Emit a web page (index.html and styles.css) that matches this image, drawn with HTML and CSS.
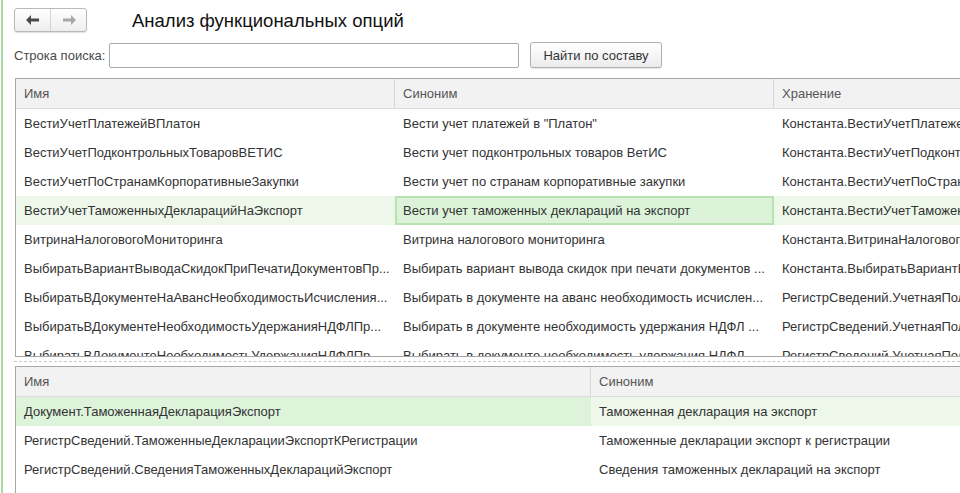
FILE: index.html
```html
<!DOCTYPE html>
<html lang="ru">
<head>
<meta charset="utf-8">
<title>Анализ функциональных опций</title>
<link rel="stylesheet" href="styles.css">
</head>
<body>
<div class="page">
  <div class="topbar">
    <div class="nav">
      <button class="navbtn back" type="button">
        <svg width="14" height="10" viewBox="0 0 14 10"><path d="M0 5 L5 0 L5 3.5 L13 3.5 L13 6.5 L5 6.5 L5 10 Z" fill="#4a4a4a"/></svg>
      </button>
      <button class="navbtn fwd" type="button">
        <svg width="14" height="10" viewBox="0 0 14 10"><path d="M14 5 L9 0 L9 3.5 L1 3.5 L1 6.5 L9 6.5 L9 10 Z" fill="#a8a8a8"/></svg>
      </button>
    </div>
    <h1 class="title">Анализ функциональных опций</h1>
  </div>
  <div class="search">
    <label class="search-label">Строка поиска:</label>
    <input class="search-input" type="text">
    <button class="find-btn" type="button">Найти по составу</button>
  </div>

  <div class="grid top-grid">
    <div class="row head">
      <div class="cell c1">Имя</div>
      <div class="cell c2">Синоним</div>
      <div class="cell c3">Хранение</div>
    </div>
    <div class="row">
      <div class="cell c1">ВестиУчетПлатежейВПлатон</div>
      <div class="cell c2">Вести учет платежей в "Платон"</div>
      <div class="cell c3">Константа.ВестиУчетПлатежейВПлатон</div>
    </div>
    <div class="row">
      <div class="cell c1">ВестиУчетПодконтрольныхТоваровВЕТИС</div>
      <div class="cell c2">Вести учет подконтрольных товаров ВетИС</div>
      <div class="cell c3">Константа.ВестиУчетПодконтрольныхТоваровВЕТИС</div>
    </div>
    <div class="row">
      <div class="cell c1">ВестиУчетПоСтранамКорпоративныеЗакупки</div>
      <div class="cell c2">Вести учет по странам корпоративные закупки</div>
      <div class="cell c3">Константа.ВестиУчетПоСтранамКорпоративныеЗакупки</div>
    </div>
    <div class="row selected">
      <div class="cell c1">ВестиУчетТаможенныхДекларацийНаЭкспорт</div>
      <div class="cell c2 current">Вести учет таможенных деклараций на экспорт</div>
      <div class="cell c3">Константа.ВестиУчетТаможенныхДекларацийНаЭкспорт</div>
    </div>
    <div class="row">
      <div class="cell c1">ВитринаНалоговогоМониторинга</div>
      <div class="cell c2">Витрина налогового мониторинга</div>
      <div class="cell c3">Константа.ВитринаНалоговогоМониторинга</div>
    </div>
    <div class="row">
      <div class="cell c1">ВыбиратьВариантВыводаСкидокПриПечатиДокументовПр...</div>
      <div class="cell c2">Выбирать вариант вывода скидок при печати документов ...</div>
      <div class="cell c3">Константа.ВыбиратьВариантВыводаСкидок</div>
    </div>
    <div class="row">
      <div class="cell c1">ВыбиратьВДокументеНаАвансНеобходимостьИсчисления...</div>
      <div class="cell c2">Выбирать в документе на аванс необходимость исчислен...</div>
      <div class="cell c3">РегистрСведений.УчетнаяПолитика</div>
    </div>
    <div class="row">
      <div class="cell c1">ВыбиратьВДокументеНеобходимостьУдержанияНДФЛПр...</div>
      <div class="cell c2">Выбирать в документе необходимость удержания НДФЛ ...</div>
      <div class="cell c3">РегистрСведений.УчетнаяПолитика</div>
    </div>
    <div class="row">
      <div class="cell c1">ВыбиратьВДокументеНеобходимостьУдержанияНДФЛПр...</div>
      <div class="cell c2">Выбирать в документе необходимость удержания НДФЛ ...</div>
      <div class="cell c3">РегистрСведений.УчетнаяПолитика</div>
    </div>
  </div>

  <div class="splitter"></div>

  <div class="grid bottom-grid">
    <div class="row head">
      <div class="cell b1">Имя</div>
      <div class="cell b2">Синоним</div>
    </div>
    <div class="row selected">
      <div class="cell b1 current-row">Документ.ТаможеннаяДекларацияЭкспорт</div>
      <div class="cell b2">Таможенная декларация на экспорт</div>
    </div>
    <div class="row">
      <div class="cell b1">РегистрСведений.ТаможенныеДекларацииЭкспортКРегистрации</div>
      <div class="cell b2">Таможенные декларации экспорт к регистрации</div>
    </div>
    <div class="row">
      <div class="cell b1">РегистрСведений.СведенияТаможенныхДекларацийЭкспорт</div>
      <div class="cell b2">Сведения таможенных деклараций на экспорт</div>
    </div>
  </div>
</div>
</body>
</html>
```
FILE: styles.css
```css
html, body {
  margin: 0;
  padding: 0;
  background: #fff;
}
body {
  width: 960px;
  height: 493px;
  overflow: hidden;
  font-family: "Liberation Sans", Arial, sans-serif;
  font-size: 13px;
  color: #333;
}
.page {
  margin-left: 1px;
  border-left: 2px solid #a9d9a1;
  height: 493px;
  box-sizing: border-box;
  padding-left: 11px;
  overflow: hidden;
}
.topbar {
  display: flex;
  align-items: center;
  padding-top: 8px;
  height: 24px;
}
.nav {
  display: flex;
  width: 73px;
  height: 24px;
  box-sizing: border-box;
  border: 1px solid #b9b9b9;
  border-radius: 3px;
  background: linear-gradient(#ffffff, #eeeeee);
  box-shadow: 0 1px 1px rgba(0,0,0,0.12);
}
.navbtn {
  flex: 1;
  border: 0;
  margin: 0;
  padding: 0;
  background: transparent;
  display: flex;
  align-items: center;
  justify-content: center;
}
.navbtn.back {
  border-right: 1px solid #d4d4d4;
}
.title {
  margin: 0 0 0 45px;
  font-size: 18.5px;
  font-weight: normal;
  color: #111;
  line-height: 24px;
  position: relative;
  top: 1px;
}
.search {
  display: flex;
  align-items: center;
  margin-top: 10px;
  height: 26px;
}
.search-label {
  color: #4a4a4a;
  width: 95px;
}
.search-input {
  width: 410px;
  height: 25px;
  box-sizing: border-box;
  border: 1px solid #aaaaaa;
  border-radius: 2px;
  margin: 0;
  padding: 0 4px;
}
.find-btn {
  margin-left: 11px;
  width: 132px;
  height: 26px;
  box-sizing: border-box;
  border: 1px solid #b0b0b0;
  border-radius: 3px;
  background: linear-gradient(#ffffff, #ececec);
  box-shadow: 0 1px 1px rgba(0,0,0,0.1);
  font-family: "Liberation Sans", Arial, sans-serif;
  font-size: 13px;
  color: #333;
  padding: 0;
}
.grid {
  border: 1px solid #a7a7a7;
  border-right: 0;
  width: 1100px;
  margin-left: 1px;
  box-sizing: border-box;
  overflow: hidden;
}
.top-grid {
  margin-top: 10px;
  height: 279px;
}
.bottom-grid {
  height: 200px;
  border-bottom: 0;
}
.splitter {
  height: 0;
  border-top: 1px dashed #c8c8c8;
  margin: 4px 0 4px 0;
}
.row {
  display: flex;
  height: 29px;
  align-items: stretch;
}
.row.head {
  height: 30px;
  background: #f2f2f2;
  border-bottom: 1px solid #dddddd;
  box-sizing: border-box;
  color: #555;
}
.cell {
  display: flex;
  align-items: center;
  padding-left: 8px;
  box-sizing: border-box;
  white-space: nowrap;
  overflow: hidden;
}
.head .cell {
  border-right: 1px solid #d6d6d6;
}
.head .cell:last-child {
  border-right: 0;
}
.c1 { width: 379px; }
.c2 { width: 379px; }
.c3 { flex: 1; }
.b1 { width: 575px; }
.b2 { flex: 1; }
.row.selected {
  background: #edf8ea;
}
.current {
  background: #dcf3da;
  border: 2px solid #b6e3b2;
  padding-left: 6px;
}
.current-row {
  background: #ddf4db;
}
```
